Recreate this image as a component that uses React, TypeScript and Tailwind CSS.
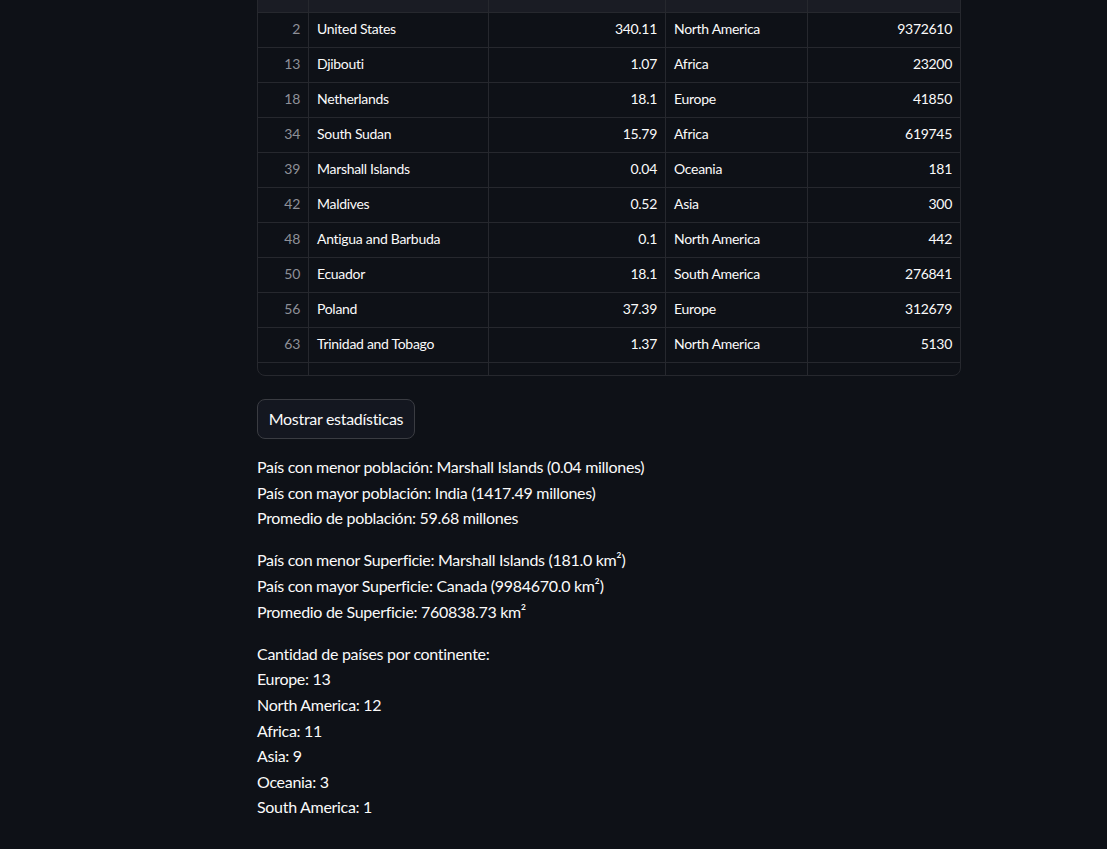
import React from "react";

const rows: [string, string, string, string, string][] = [
  ["2", "United States", "340.11", "North America", "9372610"],
  ["13", "Djibouti", "1.07", "Africa", "23200"],
  ["18", "Netherlands", "18.1", "Europe", "41850"],
  ["34", "South Sudan", "15.79", "Africa", "619745"],
  ["39", "Marshall Islands", "0.04", "Oceania", "181"],
  ["42", "Maldives", "0.52", "Asia", "300"],
  ["48", "Antigua and Barbuda", "0.1", "North America", "442"],
  ["50", "Ecuador", "18.1", "South America", "276841"],
  ["56", "Poland", "37.39", "Europe", "312679"],
  ["63", "Trinidad and Tobago", "1.37", "North America", "5130"],
  ["", "", "", "", ""],
];

const cell = "h-[35px] flex items-center px-[8px] pb-[4px] border-b border-[#26282e] border-r";

function Row({ r }: { r: [string, string, string, string, string] }) {
  return (
    <div className="grid grid-cols-[51px_180px_177px_142px_152px] text-[14px] tracking-[-0.3px] text-[#fafafa]">
      <div className={`${cell} justify-end text-[#8e9097]`}>{r[0]}</div>
      <div className={cell}>{r[1]}</div>
      <div className={`${cell} justify-end`}>{r[2]}</div>
      <div className={cell}>{r[3]}</div>
      <div className="h-[35px] flex items-center px-[8px] pb-[4px] border-b border-[#26282e] justify-end">{r[4]}</div>
    </div>
  );
}

export default function App() {
  return (
    <div
      className="min-h-[849px] w-full bg-[#0e1117] text-[#fafafa] overflow-hidden"
      style={{ fontFamily: "Lato, 'Noto Sans', sans-serif" }}
    >
      <div className="ml-[257px] w-[704px]">
        <div className="-mt-[23px] h-[399px] w-[704px] border border-[#26282e] rounded-lg overflow-hidden">
          <div className="grid grid-cols-[51px_180px_177px_142px_152px] bg-[#1a1c24]">
            <div className="h-[35px] border-b border-r border-[#26282e]" />
            <div className="h-[35px] border-b border-r border-[#26282e]" />
            <div className="h-[35px] border-b border-r border-[#26282e]" />
            <div className="h-[35px] border-b border-r border-[#26282e]" />
            <div className="h-[35px] border-b border-[#26282e]" />
          </div>
          {rows.map((r, i) => (
            <Row key={i} r={r} />
          ))}
        </div>

        <button className="mt-[23px] h-[40px] w-[158px] rounded-lg border border-[#3a3c42] bg-[#141720] text-[16px] tracking-[-0.3px] text-[#fafafa] flex items-center justify-center">
          Mostrar estadísticas
        </button>

        <div className="mt-[15px] text-[16px] leading-[25.6px] tracking-[-0.3px] text-[#fafafa]">
          <p>País con menor población: Marshall Islands (0.04 millones)</p>
          <p>País con mayor población: India (1417.49 millones)</p>
          <p>Promedio de población: 59.68 millones</p>
          <div className="h-[16.6px]" />
          <p>País con menor Superficie: Marshall Islands (181.0 km²)</p>
          <p>País con mayor Superficie: Canada (9984670.0 km²)</p>
          <p>Promedio de Superficie: 760838.73 km²</p>
          <div className="h-[16.6px]" />
          <p>Cantidad de países por continente:</p>
          <p>Europe: 13</p>
          <p>North America: 12</p>
          <p>Africa: 11</p>
          <p>Asia: 9</p>
          <p>Oceania: 3</p>
          <p>South America: 1</p>
        </div>
      </div>
    </div>
  );
}
